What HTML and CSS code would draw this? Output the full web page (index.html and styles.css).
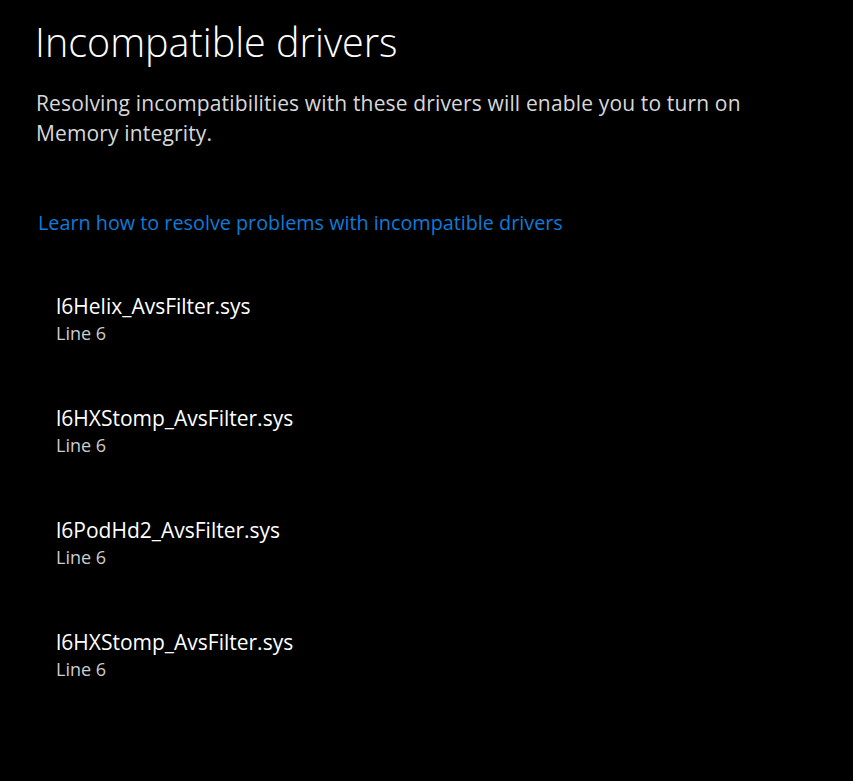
FILE: index.html
```html
<!DOCTYPE html>
<html lang="en">
<head>
  <meta charset="UTF-8">
  <title>Incompatible drivers</title>
  <link rel="stylesheet" href="styles.css">
</head>
<body>
  <div class="page">
    <h1>Incompatible drivers</h1>
    <p class="intro">Resolving incompatibilities with these drivers will enable you to turn on Memory integrity.</p>
    <a class="help-link" href="#">Learn how to resolve problems with incompatible drivers</a>

    <ul class="driver-list">
      <li class="driver">
        <div class="driver-name">l6Helix_AvsFilter.sys</div>
        <div class="driver-vendor">Line 6</div>
      </li>
      <li class="driver">
        <div class="driver-name">l6HXStomp_AvsFilter.sys</div>
        <div class="driver-vendor">Line 6</div>
      </li>
      <li class="driver">
        <div class="driver-name">l6PodHd2_AvsFilter.sys</div>
        <div class="driver-vendor">Line 6</div>
      </li>
      <li class="driver">
        <div class="driver-name">l6HXStomp_AvsFilter.sys</div>
        <div class="driver-vendor">Line 6</div>
      </li>
    </ul>
  </div>
</body>
</html>
```

FILE: styles.css
```css
html, body {
  margin: 0;
  background: #000;
  color: #fff;
  font-family: "Open Sans", "Noto Sans", sans-serif;
}
.page {
  padding: 16px 0 0 35px;
}
h1 {
  margin: 0;
  font-size: 39.5px;
  font-weight: 300;
  line-height: 52px;
}
.intro {
  max-width: 720px;
  margin: 20px 0 0 1px;
  font-size: 21px;
  letter-spacing: 0.15px;
  line-height: 30px;
  color: #d8d8d8;
}
.help-link {
  display: block;
  width: max-content;
  margin: 61px 0 0 3px;
  font-size: 19.8px;
  line-height: 28px;
  color: #0f7bd8;
  text-decoration: none;
}
.driver-list {
  list-style: none;
  margin: 55px 0 0 21px;
  padding: 0;
}
.driver {
  height: 112px;
}
.driver-name {
  font-size: 21px;
  line-height: 29px;
}
.driver-vendor {
  font-size: 18px;
  line-height: 24px;
  color: #cccccc;
}
```
